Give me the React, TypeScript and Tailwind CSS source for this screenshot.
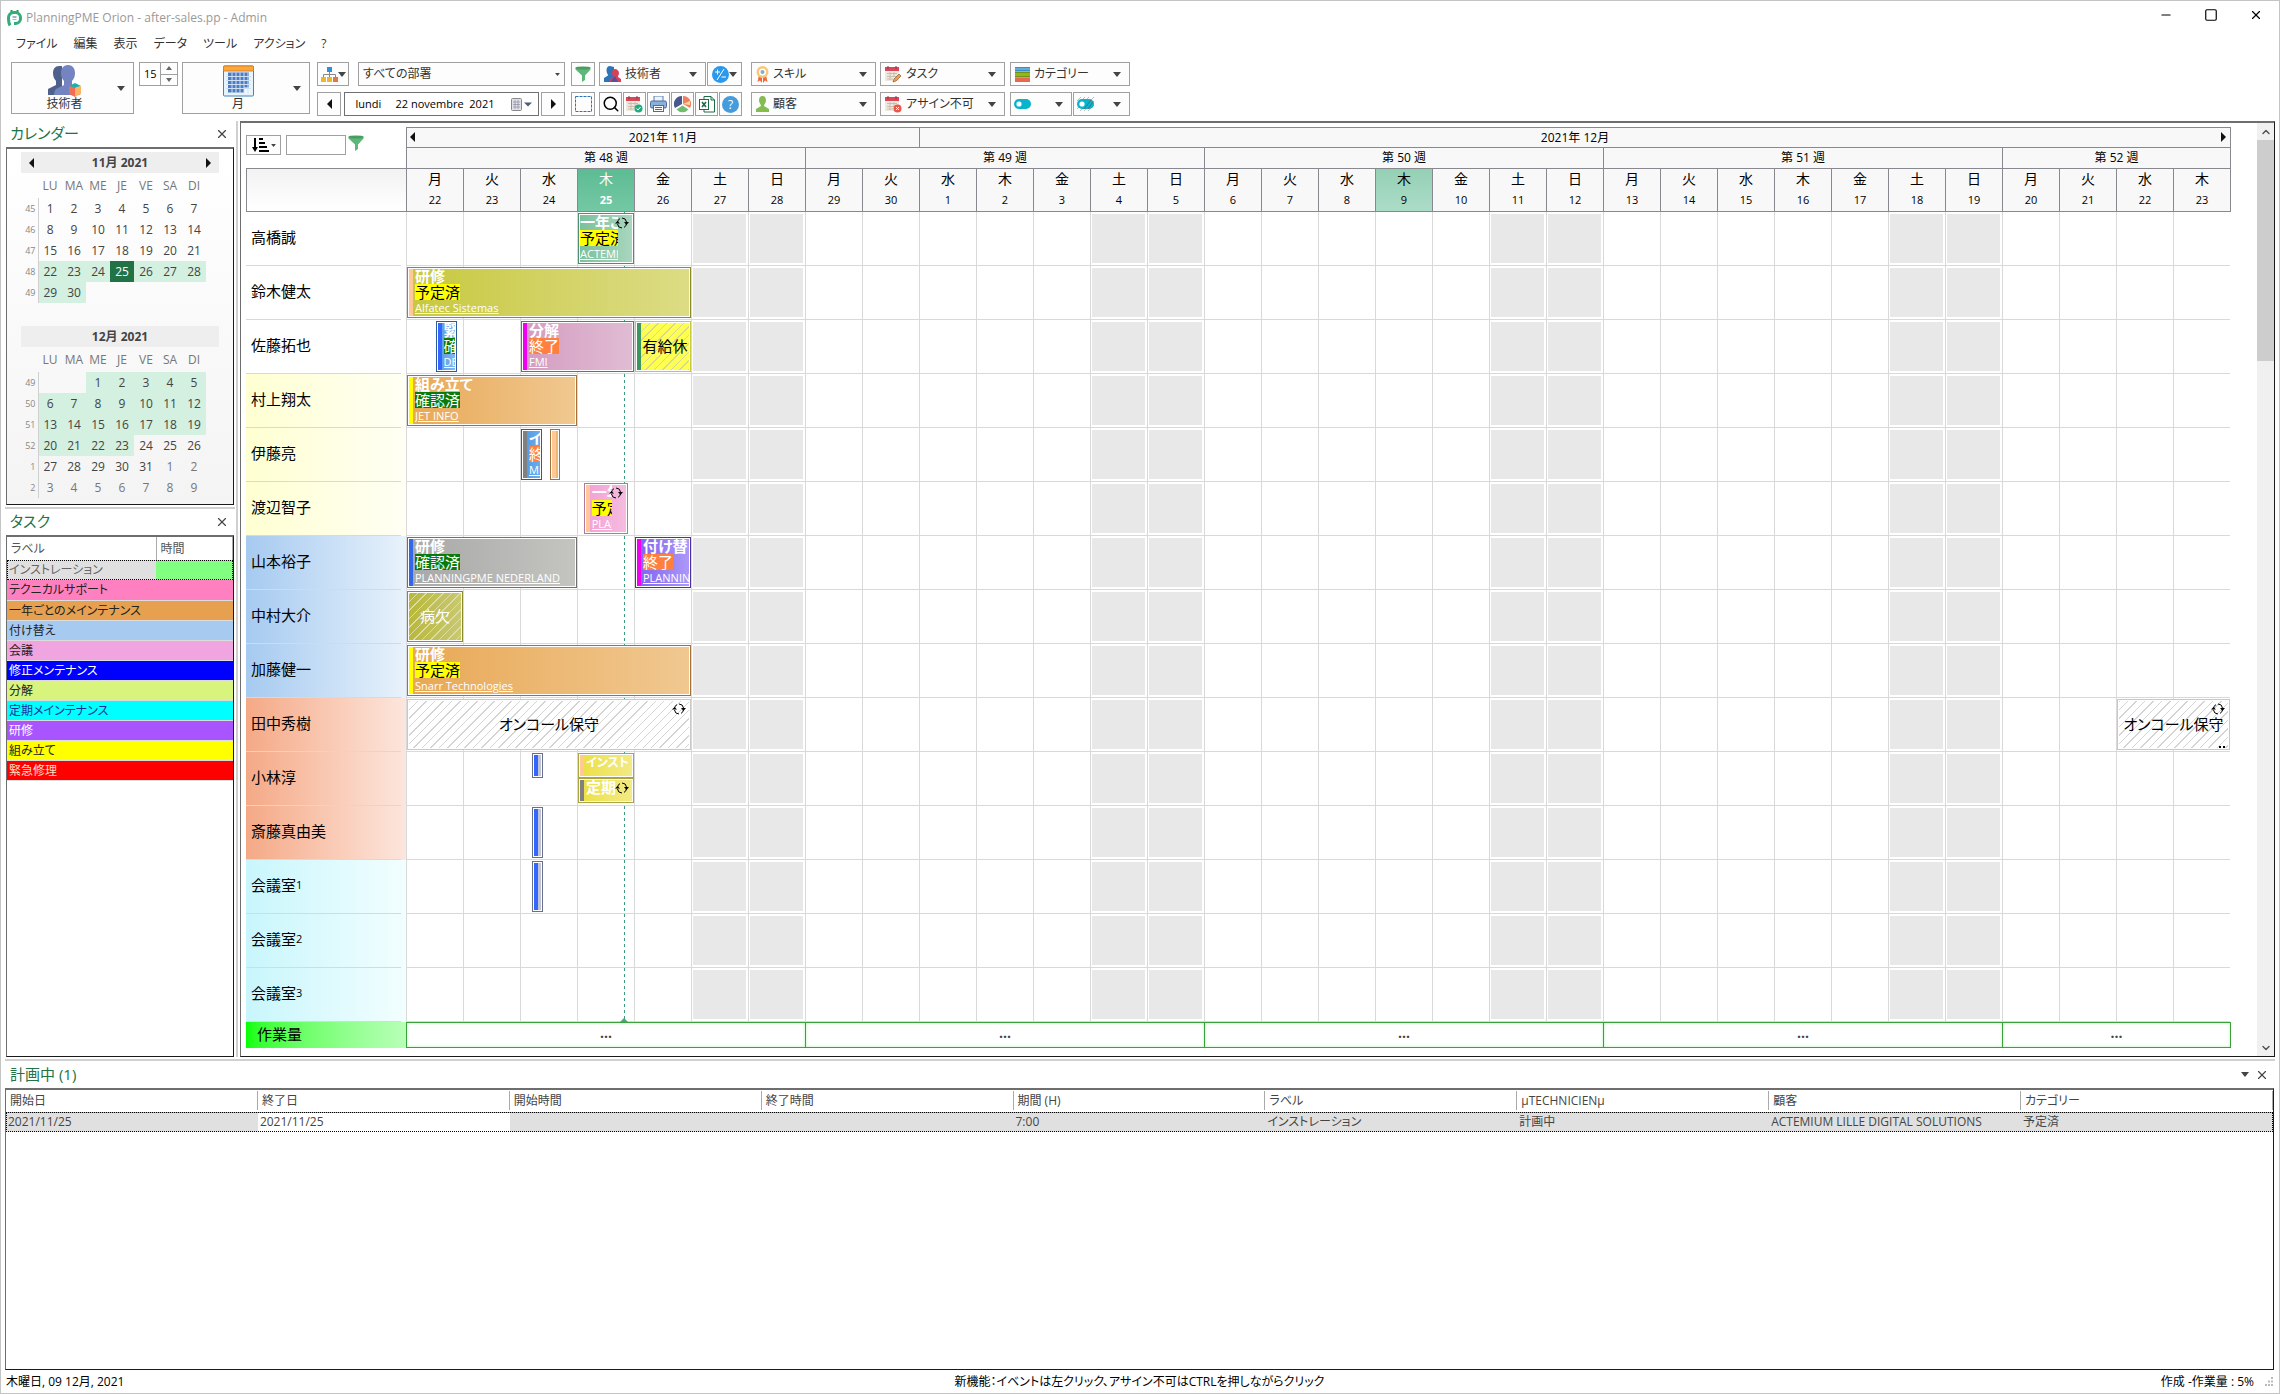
import type { ReactNode } from 'react';
import { ChevronDown, ChevronUp, Minus, Search, Square, X } from 'lucide-react';
import clsx from 'clsx';

const DAYS = 32;
const WEEKDAYS = ['月', '火', '水', '木', '金', '土', '日'];
const WEEKS = [
  { label: '第 48 週', span: 7 },
  { label: '第 49 週', span: 7 },
  { label: '第 50 週', span: 7 },
  { label: '第 51 週', span: 7 },
  { label: '第 52 週', span: 4 },
];

const days = Array.from({ length: DAYS }, (_, i) => ({
  weekday: WEEKDAYS[i % 7],
  date: i < 9 ? 22 + i : i - 8,
  weekend: i % 7 > 4,
}));

const WHITE = 'bg-white';
const CREAM = 'bg-linear-to-r from-[#ffffd2] to-[#fffff4]';
const BLUE = 'bg-linear-to-r from-[#a6caf0] to-[#e8f2fb]';
const SALMON = 'bg-linear-to-r from-[#f4a986] to-[#fce6dd]';
const CYAN = 'bg-linear-to-r from-[#c8f6fc] to-[#f2feff]';

type Tag = 'planned' | 'confirmed' | 'done';

type PlanEvent = {
  start: number;
  end: number;
  title?: string;
  tag?: Tag;
  client?: string;
  stripe?: string;
  look: string;
  border: string;
  recurring?: boolean;
  half?: 'top' | 'bottom';
  center?: string;
  hatch?: string;
  more?: boolean;
};

const TAGS: Record<Tag, { text: string; look: string }> = {
  planned: { text: '予定済', look: 'bg-[#ffff00] text-black' },
  confirmed: { text: '確認済', look: 'bg-[#0b7a0b] text-white' },
  done: { text: '終了', look: 'bg-[#ff7f3f] text-white' },
};

const GREY_HATCH = 'bg-[repeating-linear-gradient(135deg,#d4d4d4_0px,#d4d4d4_1px,transparent_1px,transparent_6px)]';
const LIGHT_HATCH = 'bg-[repeating-linear-gradient(135deg,#dcdca4_0px,#dcdca4_1px,transparent_1px,transparent_6px)]';
const YELLOW_HATCH = 'bg-[repeating-linear-gradient(135deg,#d8d890_0px,#d8d890_1px,transparent_1px,transparent_6px)]';

const BLUE_BAR: PlanEvent = { start: 2.2, end: 2.4, stripe: 'bg-[#3366ff]', look: 'bg-[#c0c4d4]', border: 'border-[#66708c]' };

const rows: { name: string; look: string; events: PlanEvent[]; room?: number }[] = [
  { name: '高橋誠', look: WHITE, events: [
    { start: 3, end: 4, title: '一年ご', tag: 'planned', client: 'ACTEMI', look: 'bg-linear-to-r from-[#7cc09c] to-[#a8d6be]', border: 'border-[#4f8f70]', recurring: true },
  ] },
  { name: '鈴木健太', look: WHITE, events: [
    { start: 0, end: 5, title: '研修', tag: 'planned', client: 'Alfatec Sistemas', stripe: 'bg-[#ffc896]', look: 'bg-linear-to-r from-[#c8c83c] to-[#dcdc84]', border: 'border-[#8c8c28]' },
  ] },
  { name: '佐藤拓也', look: WHITE, events: [
    { start: 0.5, end: 0.9, title: '緊', tag: 'confirmed', client: 'DE', stripe: 'bg-[#3366ff]', look: 'bg-linear-to-r from-[#5599e4] to-[#80b8f4]', border: 'border-[#2c5c9c]' },
    { start: 2, end: 4, title: '分解', tag: 'done', client: 'FMI', stripe: 'bg-[#f000f0]', look: 'bg-linear-to-r from-[#d49cc0] to-[#e0bcd4]', border: 'border-[#8c5c7c]' },
    { start: 4, end: 5, center: '有給休', stripe: 'bg-[#3c9660]', look: 'bg-[#ffff50]', border: 'border-[#c8c83c]', hatch: YELLOW_HATCH },
  ] },
  { name: '村上翔太', look: CREAM, events: [
    { start: 0, end: 3, title: '組み立て', tag: 'confirmed', client: 'JET INFO', stripe: 'bg-[#ffff00]', look: 'bg-linear-to-r from-[#e8a854] to-[#f0c890]', border: 'border-[#a4703c]' },
  ] },
  { name: '伊藤亮', look: CREAM, events: [
    { start: 2, end: 2.38, title: 'イ', tag: 'done', client: 'MI', stripe: 'bg-[#808080]', look: 'bg-linear-to-r from-[#4c98e4] to-[#6cacec]', border: 'border-[#2c5c9c]' },
    { start: 2.5, end: 2.7, stripe: 'bg-[#ffc896]', look: 'bg-[#f0b870]', border: 'border-[#a4703c]' },
  ] },
  { name: '渡辺智子', look: CREAM, events: [
    { start: 3.1, end: 3.9, title: '一年', tag: 'planned', client: 'PLAN', stripe: 'bg-[#ffc896]', look: 'bg-linear-to-r from-[#f4a0d4] to-[#f4bce0]', border: 'border-[#b47898]', recurring: true },
  ] },
  { name: '山本裕子', look: BLUE, events: [
    { start: 0, end: 3, title: '研修', tag: 'confirmed', client: 'PLANNINGPME NEDERLAND', stripe: 'bg-[#3366e8]', look: 'bg-linear-to-r from-[#a8a8a8] to-[#c4c4c0]', border: 'border-[#707070]' },
    { start: 4, end: 5, title: '付け替', tag: 'done', client: 'PLANNING', stripe: 'bg-[#f000f0]', look: 'bg-linear-to-r from-[#8060f0] to-[#ac98f8]', border: 'border-[#50309c]' },
  ] },
  { name: '中村大介', look: BLUE, events: [
    { start: 0, end: 1, center: '病欠', look: 'bg-linear-to-r from-[#b8b838] to-[#c8c870] text-white', border: 'border-[#8c8c28]', hatch: LIGHT_HATCH },
  ] },
  { name: '加藤健一', look: BLUE, events: [
    { start: 0, end: 5, title: '研修', tag: 'planned', client: 'Snarr Technologies', stripe: 'bg-[#ffff00]', look: 'bg-linear-to-r from-[#e8a854] to-[#f0c890]', border: 'border-[#a4703c]' },
  ] },
  { name: '田中秀樹', look: SALMON, events: [
    { start: 0, end: 5, center: 'オンコール保守', look: 'bg-white', border: 'border-[#c8c8c8]', hatch: GREY_HATCH, recurring: true },
    { start: 30, end: 32, center: 'オンコール保守', look: 'bg-white', border: 'border-[#c8c8c8]', hatch: GREY_HATCH, recurring: true, more: true },
  ] },
  { name: '小林淳', look: SALMON, events: [
    { ...BLUE_BAR, half: 'top' },
    { start: 3, end: 4, title: 'インスト', stripe: 'bg-[#ffc896]', look: 'bg-linear-to-r from-[#ece040] to-[#f2ea84]', border: 'border-[#aca43c]', half: 'top' },
    { start: 3, end: 4, title: '定期', stripe: 'bg-[#808080]', look: 'bg-linear-to-r from-[#ece040] to-[#f2ea84]', border: 'border-[#aca43c]', half: 'bottom', recurring: true },
  ] },
  { name: '斎藤真由美', look: SALMON, events: [BLUE_BAR] },
  { name: '会議室', room: 1, look: CYAN, events: [BLUE_BAR] },
  { name: '会議室', room: 2, look: CYAN, events: [] },
  { name: '会議室', room: 3, look: CYAN, events: [] },
];

const tasks = [
  { label: 'テクニカルサポート', look: 'bg-[#ff80c0] text-[#222]' },
  { label: '一年ごとのメインテナンス', look: 'bg-[#e6a050] text-[#222]' },
  { label: '付け替え', look: 'bg-[#a6caf0] text-[#222]' },
  { label: '会議', look: 'bg-[#f0a4e0] text-[#222]' },
  { label: '修正メンテナンス', look: 'bg-[#0000ff] text-white' },
  { label: '分解', look: 'bg-[#d8f47c] text-[#222]' },
  { label: '定期メインテナンス', look: 'bg-[#00ffff] text-[#1c2c9c]' },
  { label: '研修', look: 'bg-[#a855ff] text-white' },
  { label: '組み立て', look: 'bg-[#ffff00] text-[#222]' },
  { label: '緊急修理', look: 'bg-[#ff0000] text-[#f8e0c0]' },
];

const planned = [
  ['開始日', '2021/11/25'],
  ['終了日', '2021/11/25'],
  ['開始時間', ''],
  ['終了時間', ''],
  ['期間 (H)', '7:00'],
  ['ラベル', 'インストレーション'],
  ['μTECHNICIENμ', '計画中'],
  ['顧客', 'ACTEMIUM LILLE DIGITAL SOLUTIONS'],
  ['カテゴリー', '予定済'],
];

const BOX = 'border border-[#a0a0a0] bg-[#fdfdfd]';
const PANEL = 'border border-t-2 border-t-[#6e6e6e] border-l-[#6e6e6e] border-r-[#1a1a1a] border-b-[#1a1a1a]';

function Caret({ small }: { small?: boolean }) {
  return (
    <svg width={small ? 5 : 8} height={small ? 3 : 5} viewBox="0 0 8 5" className="pointer-events-none shrink-0">
      <path d="M0 0h8L4 5z" fill="#444" />
    </svg>
  );
}

function Arrow({ dir }: { dir: 'left' | 'right' }) {
  return (
    <svg width="5" height="10" viewBox="0 0 5 10" className="shrink-0">
      <path d={dir === 'left' ? 'M5 0v10L0 5z' : 'M0 0v10l5-5z'} fill="#111" />
    </svg>
  );
}

function Funnel() {
  return (
    <svg width="16" height="16" viewBox="0 0 16 16">
      <path d="M.5 1.5h15v2L10 9.5V14l-3 2V9.5L.5 3.5z" fill="#5cb878" />
      <ellipse cx="8" cy="2" rx="7.5" ry="1.6" fill="#4a9c62" />
    </svg>
  );
}

function Recurring() {
  return (
    <svg width="14" height="12" viewBox="0 0 14 12" fill="none" stroke="#000">
      <path d="M2.5 6A4.5 4.5 0 0 1 5 1.6M7 1a4.6 4.6 0 0 1 4.5 4" />
      <path d="M11.5 6.5A4.5 4.5 0 0 1 9 10.4M7 11a4.6 4.6 0 0 1-4.5-4" />
      <path d="M0 6.5h5L2.5 4zM9 5h5l-2.500 3z" fill="#000" stroke="none" />
    </svg>
  );
}

function PeopleIcon() {
  return (
    <svg width="34" height="32" viewBox="0 0 34 32">
      <path d="M11 1c-4 0-6 3-6 7 0 3 1 6 3 8v4l-8 4v6h14V1z" fill="#50608c" />
      <path d="M20 0c-5 0-7 4-7 8 0 3 1 6 3 8v4l-8 4c-1 1-2 3-2 6h26v-4c0-1-1-2-2-2l-6-4v-4c2-2 3-5 3-8 0-4-2-8-7-8z" fill="#7484c0" />
      <path d="M21 21l6-3 6 3-6 2z" fill="#20b0ac" />
      <path d="M21 21l6 2v9l-6-3z" fill="#f46c54" />
      <path d="M33 21l-6 2v9l6-3z" fill="#fcb464" />
    </svg>
  );
}

function MonthIcon() {
  return (
    <svg width="31" height="32" viewBox="0 0 31 31">
      <rect x=".5" y=".5" width="30" height="30" rx="1" fill="#e8f4fc" stroke="#3c88b8" />
      <rect x=".5" y=".5" width="30" height="5" rx="1" fill="#fca63c" stroke="#d88424" />
      <rect x="5" y="7" width="21" height="20" fill="#4c7cc4" />
      <path d="M21 22h6v6h-6z" fill="#f4f8fc" />
      <path d="M3 11h25M3 15h25M3 19h25M3 23h25M9 7v21M13 7v21M17 7v21M21 7v21M25 7v21" stroke="#cfe0f4" />
    </svg>
  );
}

function OrgIcon() {
  return (
    <svg width="17" height="15" viewBox="0 0 17 15">
      <path d="M8.500 4v6M2.500 10V7.500h12V10" fill="none" stroke="#888" />
      <rect x="6" y="0" width="5" height="5" fill="#2e90d8" />
      <rect x="0" y="10" width="5" height="5" fill="#e8b830" />
      <rect x="6" y="10" width="5" height="5" fill="#e8b830" />
      <rect x="12" y="10" width="5" height="5" fill="#e07840" />
    </svg>
  );
}

function TeamIcon() {
  return (
    <svg width="17" height="16" viewBox="0 0 17 16">
      <path d="M6 0C3.500 0 2.500 2 2.500 4.500S4 8 4 9.500L0 12v4h10V1z" fill="#2e74b8" />
      <path d="M11 3C9 3 8 5 8 7s1 2 1 4l-3 2v3h11v-3l-3-2c0-2 1-2 1-4s-2-4-4-4z" fill="#d84058" />
      <path d="M8 13l3-3 3 6H7z" fill="#5c4c9c" />
    </svg>
  );
}

function PlusMinusIcon() {
  return (
    <svg width="17" height="17" viewBox="0 0 17 17">
      <circle cx="8.500" cy="8.500" r="8.500" fill="#2c98ec" />
      <path d="M3 6h5M5.500 3.500v5M5 14l7-11M9.500 11h4.500" stroke="#fff" fill="none" />
    </svg>
  );
}

function MedalIcon() {
  return (
    <svg width="13" height="17" viewBox="0 0 13 17">
      <path d="M3 9l-1.500 7L4 14.500 6 17V10zM10 9l1.500 7L9 14.500 7 17V10z" fill="#f0683c" />
      <circle cx="6.500" cy="6" r="6" fill="#f8c878" />
      <circle cx="6.500" cy="6" r="3.500" fill="#fff" />
      <circle cx="6.500" cy="6" r="2" fill="#88a8d0" />
    </svg>
  );
}

function TaskIcon({ mark }: { mark: 'edit' | 'ok' | 'no' }) {
  return (
    <svg width="17" height="17" viewBox="0 0 17 17">
      <rect x="0" y="2" width="14" height="13" fill="#efe8dc" />
      <rect x="0" y="1" width="14" height="4" fill="#d84858" />
      <path d="M3 0v3M11 0v3" stroke="#903040" />
      <path d="M2 7.500h10M2 10.500h10M2 13h6M5 6v8M9 6v5" stroke="#c8beb0" />
      {mark === 'edit' && <path d="M8 16l1-3 5-5 2 2-5 5z" fill="#f0a040" stroke="#6c5040" strokeWidth=".6" />}
      {mark === 'ok' && (
        <>
          <circle cx="12.500" cy="12.500" r="4" fill="#20ac80" />
          <path d="M10.500 12.500l1.500 1.500 2.500-3" stroke="#fff" fill="none" />
        </>
      )}
      {mark === 'no' && (
        <>
          <circle cx="12.500" cy="12.500" r="4" fill="#e85848" />
          <path d="M11 11l3 3M14 11l-3 3" stroke="#fff" />
        </>
      )}
    </svg>
  );
}

function CategoryIcon() {
  return (
    <svg width="15" height="15" viewBox="0 0 15 15">
      <rect y="0" width="15" height="4" fill="#3c8cc8" />
      <path d="M0 2h15" stroke="#8cc8f0" />
      <rect y="5" width="15" height="5" fill="#90b81c" />
      <path d="M0 5h15M0 10h15" stroke="#4c6c10" />
      <rect y="11" width="15" height="4" fill="#e86850" />
    </svg>
  );
}

function CustomerIcon() {
  return (
    <svg width="13" height="16" viewBox="0 0 13 16">
      <path d="M6.500 0C4 0 3 2 3 4.500 3 7 5 8 5 10l-5 3v3h13v-3l-5-3c0-2 2-3 2-5.500S9 0 6.500 0z" fill="#84bc50" />
    </svg>
  );
}

function ToggleIcon({ hatched }: { hatched?: boolean }) {
  return (
    <svg width="17" height="14" viewBox="0 0 17 14">
      {hatched && <path d="M0 4l4-4M0 8l8-8M0 12l12-12M3 14L17 0M7 14l10-10M11 14l6-6" stroke="#a0a0a0" strokeWidth=".7" />}
      <rect x="0" y="2" width="17" height="10" rx="5" fill="#08b4cc" />
      <circle cx="5" cy="7" r="2.600" fill="#fff" />
      {hatched && <path d="M7 12l7-9M11 12l5-7" stroke="#50707c" />}
    </svg>
  );
}

function PrinterIcon() {
  return (
    <svg width="17" height="16" viewBox="0 0 17 16">
      <rect x="4" y="0" width="9" height="6" fill="#eef4fc" stroke="#5c7ca8" />
      <rect x=".5" y="5" width="16" height="7" rx="1.500" fill="#8cb0dc" stroke="#4c6c9c" />
      <rect x="3.500" y="9.500" width="10" height="6" fill="#fff" stroke="#4c6c9c" />
      <path d="M5 11.500h7M5 13.500h7" stroke="#3c6cb8" />
    </svg>
  );
}

function PieIcon() {
  return (
    <svg width="17" height="17" viewBox="0 0 17 17">
      <path d="M8 8V0a8 8 0 0 0-7 12z" fill="#48588c" />
      <path d="M9 8V0a8 8 0 0 1 7 12z" fill="#f08060" />
      <path d="M8.500 9.500l6 4a8 8 0 0 1-12 0z" fill="#70bc70" />
      <path d="M9 8l7-3v4z" fill="#fcd8a0" />
    </svg>
  );
}

function ExcelIcon() {
  return (
    <svg width="16" height="17" viewBox="0 0 16 17">
      <path d="M5 .5h7l3.500 3.500v12H5z" fill="#fff" stroke="#1c6c44" />
      <path d="M12 .5V4h3.500" fill="none" stroke="#1c6c44" />
      <rect x=".5" y="3.500" width="9" height="10" fill="#fff" stroke="#1c6c44" />
      <path d="M3 6l4 5M7 6l-4 5" stroke="#1c6c44" strokeWidth="1.600" />
    </svg>
  );
}

function Logo() {
  return (
    <svg width="15" height="17" viewBox="0 0 15 17" fill="none">
      <path d="M4.500 0v3M10.500 0v3" stroke="#249468" strokeWidth="2" />
      <path d="M3 15.500C1.500 13 1.500 10 1.500 7.500a5 5 0 0 1 5-5h2a5 5 0 0 1 5 5v1a5 5 0 0 1-5 5H7" stroke="#34ac7c" strokeWidth="3" />
      <path d="M5.500 7h4" stroke="#2c6cb0" />
      <path d="M5.500 9.500h4" stroke="#e8b040" />
    </svg>
  );
}

function IconButton({ label, className, children }: { label: string; className: string; children: ReactNode }) {
  return (
    <button aria-label={label} className={clsx(BOX, 'flex h-6 items-center justify-center', className)}>
      {children}
    </button>
  );
}

function Combo({ label, icon, className }: { label: string; icon?: ReactNode; className: string }) {
  return (
    <div className={clsx(BOX, 'flex h-6 items-center gap-1 pl-1', icon ? 'pr-2' : 'pr-1', className)}>
      {icon}
      <select aria-label={label} className="h-full min-w-0 flex-1 appearance-none bg-transparent text-[12px] text-[#333] outline-none">
        <option>{label}</option>
      </select>
      <Caret small={!icon} />
    </div>
  );
}

function Toolbar() {
  return (
    <div className="flex items-start pt-[9px] pl-[10px] text-[#333]">
      <button className={clsx(BOX, 'grid h-[52px] w-[123px] grid-cols-[1fr_8px] items-center pr-2')}>
        <span className="flex flex-col items-center">
          <PeopleIcon />
          <span className="text-[12px] leading-[14px]">技術者</span>
        </span>
        <Caret />
      </button>
      <div className={clsx(BOX, 'ml-[5px] flex h-6 w-[39px]')}>
        <input aria-label="間隔" defaultValue="15" className="min-w-0 flex-1 bg-white pl-1 text-[11px] text-black outline-none" />
        <div className="flex w-[17px] flex-col border-l border-[#a0a0a0]">
          <button aria-label="増やす" className="flex flex-1 items-center justify-center border-b border-[#a0a0a0]">
            <svg width="6" height="4" viewBox="0 0 6 4"><path d="M0 4h6L3 0z" fill="#666" /></svg>
          </button>
          <button aria-label="減らす" className="flex flex-1 items-center justify-center">
            <svg width="6" height="4" viewBox="0 0 6 4"><path d="M0 0h6L3 4z" fill="#666" /></svg>
          </button>
        </div>
      </div>
      <button className={clsx(BOX, 'ml-1 grid h-[52px] w-[128px] grid-cols-[1fr_8px] items-center pr-2')}>
        <span className="flex flex-col items-center">
          <MonthIcon />
          <span className="text-[12px] leading-[14px]">月</span>
        </span>
        <Caret />
      </button>

      <div className="ml-[7px] flex w-[248px] flex-col gap-1.5">
        <div className="flex justify-between">
          <IconButton label="組織" className="w-8"><OrgIcon /><Caret /></IconButton>
          <Combo label="すべての部署" className="w-[207px]" />
        </div>
        <div className="flex justify-between">
          <IconButton label="前へ" className="w-6"><Arrow dir="left" /></IconButton>
          <div className="flex h-6 w-[195px] items-center border border-[#707070] bg-white pr-1.5 pl-[11px]">
            <input aria-label="日付" defaultValue="lundi     22 novembre  2021" className="min-w-0 flex-1 text-[11px] text-black outline-none" />
            <svg width="21" height="13" viewBox="0 0 21 13">
              <rect x=".5" y=".5" width="10" height="12" rx="1" fill="#e0e0e8" stroke="#888" />
              <path d="M2 4h7M2 6.500h7M2 9h7M4 2v9M7 2v9" stroke="#8c8ca0" strokeWidth=".7" />
              <path d="M13 4.500h8l-4 4z" fill="#4c5c78" />
            </svg>
          </div>
          <IconButton label="次へ" className="w-6"><Arrow dir="right" /></IconButton>
        </div>
      </div>

      <div className="ml-1.5 flex flex-col gap-1.5">
        <div className="flex">
          <IconButton label="フィルター" className="w-6"><Funnel /></IconButton>
          <Combo label="技術者" icon={<TeamIcon />} className="ml-1 w-[107px]" />
          <IconButton label="増減" className="ml-px w-[35px]"><PlusMinusIcon /><Caret /></IconButton>
        </div>
        <div className="flex gap-px">
          <IconButton label="選択" className="mr-[3px] w-6">
            <svg width="17" height="16" viewBox="0 0 17 16"><rect x=".5" y=".5" width="16" height="15" fill="none" stroke="#2c74b8" strokeDasharray="3 1" /></svg>
          </IconButton>
          <IconButton label="検索" className="w-[23px] text-black"><Search size={18} /></IconButton>
          <IconButton label="予定" className="w-[23px]"><TaskIcon mark="ok" /></IconButton>
          <IconButton label="印刷" className="w-[23px]"><PrinterIcon /></IconButton>
          <IconButton label="統計" className="w-[23px]"><PieIcon /></IconButton>
          <IconButton label="エクセル" className="w-[23px]"><ExcelIcon /></IconButton>
          <IconButton label="ヘルプ" className="w-[23px]">
            <span className="size-[17px] rounded-full bg-[#449cdc] text-[12px] leading-[17px] text-white">?</span>
          </IconButton>
        </div>
      </div>

      <div className="ml-[9px] flex w-[125px] flex-col gap-1.5">
        <Combo label="スキル" icon={<MedalIcon />} className="w-full" />
        <Combo label="顧客" icon={<CustomerIcon />} className="w-full" />
      </div>
      <div className="ml-1 flex w-[125px] flex-col gap-1.5">
        <Combo label="タスク" icon={<TaskIcon mark="edit" />} className="w-full" />
        <Combo label="アサイン不可" icon={<TaskIcon mark="no" />} className="w-full" />
      </div>
      <div className="ml-[5px] flex w-[120px] flex-col gap-1.5">
        <Combo label="カテゴリー" icon={<CategoryIcon />} className="w-full" />
        <div className="flex gap-px">
          <button aria-label="切替" className={clsx(BOX, 'flex h-6 w-[62px] items-center justify-between pr-2 pl-[3px]')}><ToggleIcon /><Caret /></button>
          <button aria-label="切替 (斜線)" className={clsx(BOX, 'flex h-6 w-[57px] items-center justify-between pr-2 pl-[3px]')}><ToggleIcon hatched /><Caret /></button>
        </div>
      </div>
    </div>
  );
}

function PanelTitle({ children }: { children: ReactNode }) {
  return (
    <div className="flex h-[26px] items-center justify-between pr-1.5 pb-px pl-[5px]">
      <h2 className="text-[15px] text-[#217346]">{children}</h2>
      <button aria-label="閉じる" className="text-[#444]"><X size={14} /></button>
    </div>
  );
}

type MonthProps = {
  title: string;
  weeks: number[];
  offset: number;
  length: number;
  marked: [number, number];
  nav?: boolean;
};

function MonthTable({ title, weeks, offset, length, marked, nav }: MonthProps) {
  return (
    <div>
      <div className="flex h-[21px] items-center justify-between bg-[#eeeeee] px-2 text-[12px] font-bold text-[#444]">
        {nav ? <button aria-label="前の月"><Arrow dir="left" /></button> : <span />}
        {title}
        {nav ? <button aria-label="次の月"><Arrow dir="right" /></button> : <span />}
      </div>
      <table className="w-[185px] table-fixed border-collapse text-center text-[12px] text-[#444]">
        <thead>
          <tr className="h-[25px] text-[#777]">
            <td className="w-[17px] p-0" />
            {['LU', 'MA', 'ME', 'JE', 'VE', 'SA', 'DI'].map((d) => (
              <th key={d} className="p-0 font-normal">{d}</th>
            ))}
          </tr>
        </thead>
        <tbody>
          {weeks.map((week, w) => (
            <tr key={week} className="h-[21px]">
              <th className="border-r border-[#d0d0d0] p-0 pr-0.5 text-right text-[9px] font-normal text-[#888]">{week}</th>
              {WEEKDAYS.map((d, i) => {
                const n = w * 7 + i - offset + 1;
                const outside = n > length;
                const visible = n > 0 && (!outside || length === 31);
                const today = nav && n === 25;
                return (
                  <td
                    key={d}
                    className={clsx(
                      'p-0 leading-[21px]',
                      today && 'bg-[#217346] text-white',
                      !today && n >= marked[0] && n <= marked[1] && 'bg-[#d3f0e0]',
                      outside && 'text-[#777]',
                    )}
                  >
                    {visible && (outside ? n - length : n)}
                  </td>
                );
              })}
            </tr>
          ))}
        </tbody>
      </table>
    </div>
  );
}

function Sidebar() {
  return (
    <aside className="flex w-[230px] shrink-0 flex-col">
      <PanelTitle>カレンダー</PanelTitle>
      <div className={clsx(PANEL, 'mx-px flex flex-col gap-[23px] bg-linear-to-b from-white to-[#f4f4f4] pt-[3px] pr-[14px] pb-1.5 pl-[14px]')}>
        <MonthTable title="11月 2021" weeks={[45, 46, 47, 48, 49]} offset={0} length={30} marked={[22, 30]} nav />
        <MonthTable title="12月 2021" weeks={[49, 50, 51, 52, 1, 2]} offset={2} length={31} marked={[1, 23]} />
      </div>
      <div className="mt-0.5 h-0.5 bg-[#d0d0d0]" />
      <PanelTitle>タスク</PanelTitle>
      <div className={clsx(PANEL, 'mx-px flex-1 bg-white')}>
        <table className="w-full table-fixed border-collapse text-[12px]">
          <thead>
            <tr className="h-[23px] text-left text-[#555]">
              <th className="w-[149px] p-0 pl-1 font-normal">ラベル</th>
              <th className="border-x border-[#aaa] p-0 pl-1 font-normal">時間</th>
            </tr>
          </thead>
          <tbody>
            <tr className="h-5 outline outline-1 -outline-offset-1 outline-black outline-dotted">
              <td className="bg-[#e0e0e0] p-0 pl-0.5 whitespace-nowrap text-[#666]">インストレーション</td>
              <td className="bg-[#80ff80] p-0" />
            </tr>
            {tasks.map((t) => (
              <tr key={t.label} className={clsx('h-5 border-b border-[#dcdcdc]', t.look)}>
                <td colSpan={2} className="p-0 pl-0.5 leading-[19px] whitespace-nowrap">{t.label}</td>
              </tr>
            ))}
          </tbody>
        </table>
      </div>
    </aside>
  );
}

function EventCard({ event }: { event: PlanEvent }) {
  const { start, end, title, tag, client, stripe, look, border, recurring, half, center, hatch, more } = event;
  const place = { left: `${(start / DAYS) * 100}%`, width: `${((end - start) / DAYS) * 100}%` };
  return (
    <div
      className={clsx('absolute pl-px', half === 'bottom' ? 'top-[26px]' : 'top-px', half ? 'h-[25px]' : 'h-[51px]')}
      style={place}
    >
      <div className={clsx('relative h-full border bg-white p-px', border)}>
        <div className={clsx('flex h-full overflow-hidden', look)}>
          {stripe && <span className={clsx('w-1 shrink-0', stripe)} />}
          {center && (
            <div className={clsx('flex min-w-0 flex-1 items-center justify-center overflow-hidden text-[15px] whitespace-nowrap', hatch)}>
              {center}
            </div>
          )}
          {title && (
            <div
              className={clsx(
                'min-w-0 flex-1 overflow-hidden whitespace-nowrap text-white',
                stripe && 'ml-0.5',
                recurring && !half && 'mr-[14px]',
              )}
            >
              <p className={clsx('h-[15px] leading-[15px] font-bold', half === 'top' ? 'text-[12px]' : 'text-[15px]')}>{title}</p>
              {tag && (
                <p className="h-4 text-[15px] leading-4">
                  <span className={clsx('inline-block h-4', TAGS[tag].look)}>{TAGS[tag].text}</span>
                </p>
              )}
              {client && <p className="text-[11px] leading-4 underline">{client}</p>}
            </div>
          )}
        </div>
        {recurring && <span className="absolute top-[3px] right-1"><Recurring /></span>}
        {more && (
          <span className="absolute right-1 bottom-px flex gap-0.5">
            <i className="size-0.5 bg-black" />
            <i className="size-0.5 bg-black" />
          </span>
        )}
      </div>
    </div>
  );
}

const GRID = 'grid grid-cols-[repeat(32,minmax(0,1fr))]';

function Schedule() {
  return (
    <section className={clsx(PANEL, 'flex min-w-0 flex-1 bg-white')}>
      <div className="min-w-0 flex-1 pt-1 pr-[26px] pb-2 pl-[5px]">
        <div className="flex">
          <div className="flex w-[160px] shrink-0 flex-col">
            <div className="flex h-[41px] items-start pt-2">
              <button aria-label="並べ替え" className={clsx(BOX, 'flex h-5 w-[35px] items-center justify-center gap-0.5')}>
                <svg width="17" height="14" viewBox="0 0 17 14">
                  <path d="M3 0v11" stroke="#000" strokeWidth="2" />
                  <path d="M0 9h6l-3 5zM7 0h4v2H7zM7 4h6v2H7zM7 8h8v2H7zM7 12h10v2H7z" />
                </svg>
                <Caret small />
              </button>
              <input aria-label="検索" className="mr-0.5 ml-[5px] h-5 w-[60px] border border-[#a0a0a0] bg-white" />
              <Funnel />
            </div>
            <div className="h-[44px] border border-r-0 border-[#888890] bg-linear-to-b from-[#f2f2f2] to-white" />
          </div>
          <div className="min-w-0 flex-1 border-r border-b border-[#888890] bg-[#f8f8f8] text-black">
            <div className={clsx(GRID, 'relative h-5 border-t border-[#888890] text-center text-[12px] leading-[19px]')}>
              <div className="border-l border-[#888890]" style={{ gridColumn: 'span 9' }}>2021年 11月</div>
              <div className="border-l border-[#888890]" style={{ gridColumn: 'span 23' }}>2021年 12月</div>
              <button aria-label="前の期間" className="absolute top-1 left-1"><Arrow dir="left" /></button>
              <button aria-label="次の期間" className="absolute top-1 right-1"><Arrow dir="right" /></button>
            </div>
            <div className={clsx(GRID, 'h-[21px] border-t border-[#888890] text-center text-[12px] leading-5')}>
              {WEEKS.map((w) => (
                <div key={w.label} className="border-l border-[#888890]" style={{ gridColumn: `span ${w.span}` }}>{w.label}</div>
              ))}
            </div>
            <div className={clsx(GRID, 'h-[43px] border-t border-[#888890] text-center')}>
              {days.map((d, i) => (
                <div
                  key={i}
                  className={clsx(
                    'border-l border-[#888890]',
                    i === 3 && 'bg-linear-to-b from-[#5cbc94] to-[#74c8a4] text-white',
                    i === 17 && 'bg-linear-to-b from-[#94d0b4] to-[#acdcc8]',
                  )}
                >
                  <p className="text-[14px] leading-5">{d.weekday}</p>
                  <p className={clsx('text-[11px] leading-[22px]', i === 3 && 'font-bold')}>{d.date}</p>
                </div>
              ))}
            </div>
          </div>
        </div>

        <div className="pr-px">
          {rows.map((row, r) => (
            <div key={r} className="flex h-[54px]">
              <div className={clsx('w-[160px] shrink-0 pr-[5px]', row.look)}>
                <div className="flex h-full items-center border-b border-[#d9d9d9] pb-0.5 pl-[5px] text-[15px] text-black">
                  {row.name}
                  {row.room && <span className="text-[11px]">{row.room}</span>}
                </div>
              </div>
              <div className={clsx(GRID, 'relative min-w-0 flex-1')}>
                {days.map((d, i) => (
                  <div key={i} className="border-b border-l border-[#d9d9d9] py-0.5 pr-0.5 pl-px">
                    {d.weekend && <div className="h-full bg-[#e8e8e8]" />}
                  </div>
                ))}
                <div className="absolute inset-y-0 left-[11.95%] w-px bg-[repeating-linear-gradient(to_bottom,#3f9b7a_0px,#3f9b7a_3px,transparent_3px,transparent_6px)]" />
                {row.events.map((e, i) => <EventCard key={i} event={e} />)}
              </div>
            </div>
          ))}
        </div>

        <div className="flex h-[26px]">
          <div className="flex w-[160px] shrink-0 items-center bg-linear-to-r from-[#00ff00] to-[#b8ffb8] pb-0.5 pl-[11px] text-[15px] text-black">作業量</div>
          <div className={clsx(GRID, 'relative min-w-0 flex-1 border-y border-r border-[#3ca03c]')}>
            {WEEKS.map((w) => (
              <div
                key={w.label}
                className="border-l border-[#3ca03c] text-center text-[14px] leading-5 font-bold text-[#444] shadow-[inset_0_0_3px_#b0f0b0]"
                style={{ gridColumn: `span ${w.span}` }}
              >
                ...
              </div>
            ))}
            <svg width="8" height="4" viewBox="0 0 8 4" className="absolute -top-[5px] left-[11.75%]"><path d="M0 4h8L4 0z" fill="#4ca47c" /></svg>
          </div>
        </div>
      </div>
      <div className="flex w-[17px] shrink-0 flex-col bg-[#f0f0f0] text-[#555]">
        <button aria-label="上へ" className="flex h-[17px] items-center justify-center"><ChevronUp size={12} strokeWidth={3} /></button>
        <div className="h-[221px] bg-[#cdcdcd]" />
        <button aria-label="下へ" className="mt-auto flex h-[17px] items-center justify-center"><ChevronDown size={12} strokeWidth={3} /></button>
      </div>
    </section>
  );
}

function PlannedPanel() {
  return (
    <section className="flex flex-1 flex-col px-1">
      <div className="mt-0.5 h-0.5 bg-[#d0d0d0]" />
      <div className="flex h-[27px] items-center pr-1.5 pl-[5px]">
        <h2 className="flex-1 text-[15px] text-[#217346]">計画中 (1)</h2>
        <button aria-label="メニュー" className="mr-1.5"><Caret /></button>
        <button aria-label="閉じる" className="text-[#444]"><X size={14} /></button>
      </div>
      <div className={clsx(PANEL, 'mr-px flex-1')}>
        <table className="w-full table-fixed border-collapse text-[12px] text-[#444]">
          <thead>
            <tr className="h-[22px] border-b border-[#a8a8a8] text-left">
              {planned.map(([head]) => (
                <th key={head} className="p-0 font-normal">
                  <span className="block border-r border-[#aaa] pl-1 leading-[19px]">{head}</span>
                </th>
              ))}
            </tr>
          </thead>
          <tbody>
            <tr className="h-5 outline outline-1 -outline-offset-1 outline-black outline-dotted">
              {planned.map(([head, value], i) => (
                <td key={head} className={clsx('p-0 pl-0.5 whitespace-nowrap', i === 1 ? 'bg-white' : 'bg-[#e0e0e0]')}>{value}</td>
              ))}
            </tr>
          </tbody>
        </table>
      </div>
    </section>
  );
}

export default function App() {
  return (
    <div className="flex min-h-screen flex-col border border-[#c4c4c4] bg-white font-['Open_Sans','Noto_Sans_CJK_JP',sans-serif] [font-feature-settings:'palt']">
      <header>
        <div className="flex h-[34px] items-center pl-1.5 text-[#999]">
          <Logo />
          <h1 className="flex-1 pl-1 text-[12px]">PlanningPME Orion - after-sales.pp - Admin</h1>
          <div className="flex items-start gap-[31px] self-start pt-[7px] pr-[16px] text-black">
            <button aria-label="最小化"><Minus size={14} strokeWidth={2} /></button>
            <button aria-label="最大化"><Square size={14} strokeWidth={2} /></button>
            <button aria-label="閉じる"><X size={14} strokeWidth={2} /></button>
          </div>
        </div>
        <nav className="flex h-[18px] items-center gap-4 pl-[15px] text-[12px] text-[#333]">
          {['ファイル', '編集', '表示', 'データ', 'ツール', 'アクション', '?'].map((m) => (
            <button key={m}>{m}</button>
          ))}
        </nav>
        <Toolbar />
      </header>
      <main className="mt-[5px] flex flex-1 flex-col">
        <div className="flex pr-1 pl-1">
          <Sidebar />
          <div className="mx-px mr-0.5 w-0.5 bg-[#d0d0d0]" />
          <Schedule />
        </div>
        <PlannedPanel />
      </main>
      <footer className="grid h-[23px] grid-cols-3 items-center pr-1.5 pl-[5px] text-[12px] text-black">
        <span>木曜日, 09 12月, 2021</span>
        <span className="text-center">新機能：イベントは左クリック、アサイン不可はCTRLを押しながらクリック</span>
        <span className="flex items-center justify-end gap-2.5">
          作成 -作業量 : 5%
          <svg width="9" height="9" viewBox="0 0 9 9" fill="#bbb"><path d="M7 0h2v2H7zM4 3.500h2v2H4zM7 3.500h2v2H7zM1 7h2v2H1zM4 7h2v2H4zM7 7h2v2H7z" /></svg>
        </span>
      </footer>
    </div>
  );
}
